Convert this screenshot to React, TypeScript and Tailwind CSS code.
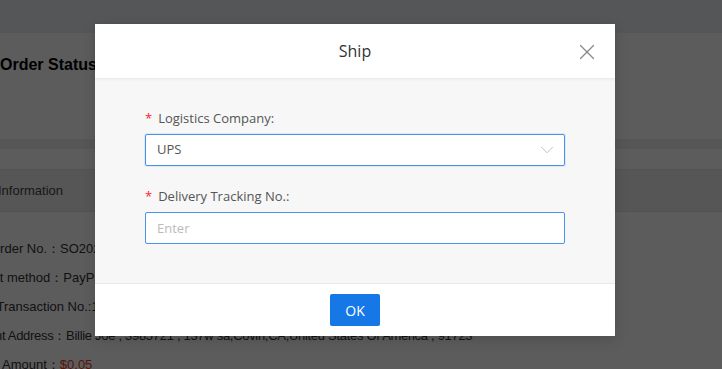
import { X, ChevronDown } from 'lucide-react';

const detailRows = [
  { label: 'Order No.', value: 'SO2021080612345678', shift: 'ml-[-10px]' },
  { label: 'Payment method', value: 'PayPal', shift: 'ml-[-48px]' },
  { label: 'PayPal Transaction No.:', value: '1K2345678A9012345', shift: 'ml-[-48px]', plain: true },
  { label: 'Payment Address', value: 'Billie Joe , 3985721 , 137w sa,Covin,CA,United States Of America , 91723', shift: 'ml-[-44px] tracking-[-0.3px]' },
];

function OrderPage() {
  return (
    <div className="min-h-[369px] bg-[#eceef2] font-['Liberation_Sans',Arial,sans-serif] text-[#333]">
      <div className="h-[33px]" />
      {/* Status card */}
      <div className="h-[106px] bg-white pt-[22px]">
        <h2 className="text-[16px] font-bold leading-[20px] text-black">Order Status</h2>
      </div>
      <div className="h-[10px]" />
      {/* Info card */}
      <div className="bg-white pt-[20px]">
        <div className="flex h-[43px] items-center border-y border-[#e2e2e2] bg-[#eeeeee] text-[13px] text-[#444]">
          <span className="ml-[-2px]">Information</span>
        </div>
        <div className="flex flex-col gap-[12px] pt-[28px] pb-4 text-[13px] leading-[17px] text-[#333]">
          {detailRows.map((row) => (
            <div key={row.label} className={`whitespace-nowrap ${row.shift}`}>
              {row.plain ? row.label : `${row.label}：`}
              <span>{row.value}</span>
            </div>
          ))}
          <div className="whitespace-nowrap ml-[2px]">
            Amount：<span className="text-[#e8401c]">$0.05</span>
          </div>
        </div>
      </div>
    </div>
  );
}

function ShipModal() {
  return (
    <div className="absolute left-[95px] top-[24px] w-[520px] bg-white font-['Open_Sans',sans-serif] shadow-[0_4px_12px_rgba(0,0,0,0.15)]">
      {/* Header */}
      <div className="relative z-10 flex h-[54px] items-center justify-center bg-white shadow-[0_1px_3px_rgba(0,0,0,0.08)]">
        <span className="text-[16px] text-[#333]">Ship</span>
        <button className="absolute right-[15px] top-[15px] text-[#888]">
          <X size={26} strokeWidth={1.1} />
        </button>
      </div>

      {/* Body */}
      <div className="bg-[#f7f7f7] px-[50px] pt-[30px] pb-[39px]">
        <label className="mb-[4px] flex h-[22px] items-center text-[13px] text-[#555]">
          <span className="mr-[6px] text-[#f5222d]">*</span>
          Logistics Company:
        </label>
        <div className="flex h-[32px] items-center justify-between rounded-[2px] border border-[#4a93ec] bg-white pl-[11px] pr-[6px] text-[13px] text-[#555] shadow-[0_0_0_1px_rgba(74,147,236,0.15)]">
          <span>UPS</span>
          <ChevronDown size={22} strokeWidth={0.8} className="text-[#aaa]" />
        </div>

        <label className="mt-[20px] mb-[4px] flex h-[22px] items-center text-[13px] text-[#555]">
          <span className="mr-[6px] text-[#f5222d]">*</span>
          Delivery Tracking No.:
        </label>
        <input
          className="block h-[32px] w-full rounded-[2px] border border-[#4a93ec] bg-white px-[11px] text-[13px] text-[#555] outline-none placeholder:text-[#bbb]"
          placeholder="Enter"
        />
      </div>

      {/* Footer */}
      <div className="flex h-[53px] items-center justify-center border-t border-[#e8e8e8] bg-white">
        <button className="h-[32px] w-[50px] rounded-[2px] bg-[#1677e6] text-[14px] font-medium text-white">
          OK
        </button>
      </div>
    </div>
  );
}

export default function App() {
  return (
    <div className="relative h-[369px] w-[722px] overflow-hidden">
      <OrderPage />
      <div className="absolute inset-0 bg-[rgba(0,0,0,0.64)]" />
      <ShipModal />
    </div>
  );
}
